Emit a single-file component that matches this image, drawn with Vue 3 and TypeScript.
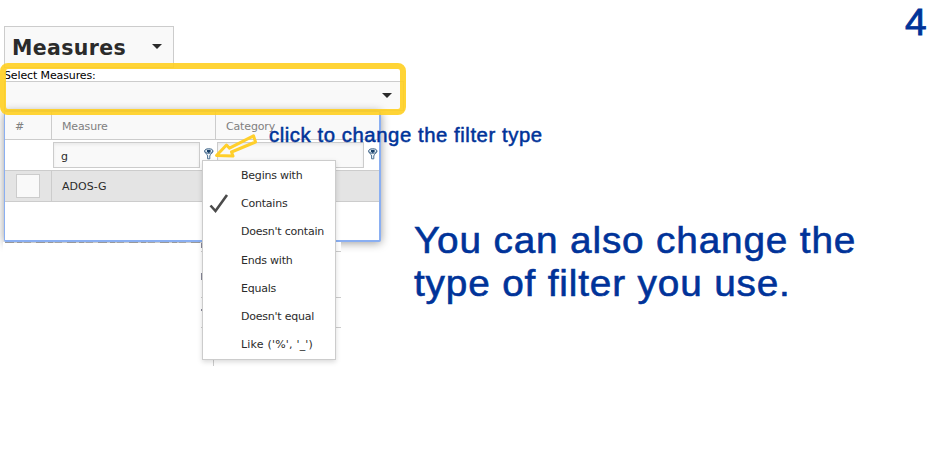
<script setup lang="ts">
import { ref } from 'vue'

interface FilterType { label: string; wide?: boolean }

const filterTypes: FilterType[] = [
  { label: 'Begins with' },
  { label: 'Contains' },
  { label: "Doesn't contain" },
  { label: 'Ends with' },
  { label: 'Equals' },
  { label: "Doesn't equal" },
  { label: "Like ('%', '_')", wide: true },
]
const selected = ref('Contains')
const measureFilter = ref('g')
const categoryFilter = ref('')
</script>

<template>
  <main class="slide">
    <section class="left">
      <button class="measures" type="button">
        <span>Measures</span>
        <svg class="caret" width="10" height="5" viewBox="0 0 10 5"><path d="M0 0H10L5 5Z" /></svg>
      </button>
      <div class="label">Select Measures:</div>
      <div class="combo">
        <svg class="caret" width="10" height="5" viewBox="0 0 10 5"><path d="M0 0H10L5 5Z" /></svg>
      </div>
      <div class="panel">
        <div class="row head">
          <div class="cell">#</div>
          <div class="cell">Measure</div>
          <div class="cell last">Category</div>
        </div>
        <div class="row filters">
          <div class="cell"></div>
          <div class="cell">
            <input v-model="measureFilter" type="text" />
            <svg class="funnel" width="10" height="12" viewBox="0 0 10 12">
              <path class="cone" d="M.8 3.2C.8 5.8 3.6 6 3.6 8V10.8H5.8V8C5.8 6 8.8 5.8 8.8 3.2" />
              <ellipse class="rim" cx="4.8" cy="3" rx="4.1" ry="2.2" />
              <path class="core" d="M3 2H6.6V3.3L4.8 5.2L3 3.3Z" />
            </svg>
          </div>
          <div class="cell last">
            <input v-model="categoryFilter" type="text" />
            <svg class="funnel" width="10" height="12" viewBox="0 0 10 12">
              <path class="cone" d="M.8 3.2C.8 5.8 3.6 6 3.6 8V10.8H5.8V8C5.8 6 8.8 5.8 8.8 3.2" />
              <ellipse class="rim" cx="4.8" cy="3" rx="4.1" ry="2.2" />
              <path class="core" d="M3 2H6.6V3.3L4.8 5.2L3 3.3Z" />
            </svg>
          </div>
        </div>
        <div class="row data">
          <div class="cell"><span class="box"></span></div>
          <div class="cell">ADOS-G</div>
          <div class="cell last"></div>
        </div>
      </div>
      <div class="behind">
        <div class="edge"></div>
        <svg class="rules" width="341" height="124" viewBox="0 0 341 124">
          <path d="M201 9.5H341M201 55.5H341M201 85.5H341M213.5 100V124" />
          <path class="bits" d="M201.5 1V6M201.5 31V38M201.5 67V69" />
        </svg>
      </div>
    </section>

    <div class="highlight"></div>

    <ul class="menu">
      <li v-for="f in filterTypes" :key="f.label" @click="selected = f.label">
        <span class="mark">
          <svg v-if="selected === f.label" width="20" height="20" viewBox="0 0 20 20">
            <path d="M1.5 11.5L6.5 17L18 1" />
          </svg>
        </span>
        <span class="text" :class="{ wide: f.wide }">{{ f.label }}</span>
      </li>
    </ul>

    <svg class="arrow" width="46" height="30" viewBox="0 0 46 30">
      <path d="M2.5 23.5L12.5 13L15.5 16.2L39.5 3.8L41.5 10L17.5 20L19 24Z" />
    </svg>
    <div class="note">click to change the filter type</div>
    <p class="message">You can also change the<br />type of filter you use.</p>
    <div class="number">4</div>
  </main>
</template>

<style>
body { background: #fff; overflow: hidden; }
</style>

<style scoped>
.slide {
  position: relative;
  box-sizing: border-box;
  width: 950px;
  height: 450px;
  padding-top: 26px;
  overflow: hidden;
  background: #fff;
  color: #2b2b2b;
  font: 11px/14px "DejaVu Sans", Verdana, sans-serif;
}
.slide *, .slide *::before { box-sizing: border-box; }
.left { width: 404px; }
.measures {
  display: flex;
  align-items: center;
  justify-content: space-between;
  width: 170px;
  height: 42px;
  margin-left: 4px;
  padding: 0 11px 0 7px;
  border: 1px solid #ccc;
  background: #f9f9f9;
  color: #2b2b2b;
  font: bold 20.5px/24px "DejaVu Sans", Verdana, sans-serif;
}
.measures span { padding-top: 2px; letter-spacing: 0.35px; }
.measures .caret { margin-bottom: 1px; }
.caret { display: block; fill: #2b2b2b; }
.label {
  height: 13px;
  margin-left: 4px;
  padding-top: 1px;
  color: #000;
  letter-spacing: -0.12px;
  white-space: nowrap;
}
.combo {
  display: flex;
  align-items: center;
  justify-content: flex-end;
  width: 400px;
  height: 30px;
  margin-left: 4px;
  padding: 0 11px 1px 0;
  border: 1px solid #ccc;
  background: #f9f9f9;
}
.panel {
  width: 377px;
  height: 131px;
  margin-left: 4px;
  border: 1px solid #8aaff2;
  border-bottom-width: 2px;
  border-right-width: 2px;
  border-radius: 2px;
  background: #fff;
  box-shadow: 0 1px 10px rgba(0, 0, 0, 0.4);
}
.row { display: flex; border-bottom: 1px solid #ccc; }
.cell { display: flex; align-items: center; width: 164px; border-right: 1px solid #ccc; padding-left: 10px; }
.cell:first-child { width: 47px; }
.cell.last { flex: 1; border-right: 0; }
.head { height: 28px; background: #f9f9f9; color: #808080; letter-spacing: -0.15px; }
.head .cell { padding-top: 2px; }
.filters { height: 31px; }
.filters .cell { border-right-color: transparent; padding-left: 1px; }
.filters input {
  width: 147px;
  height: 26px;
  padding: 3px 0 0 7px;
  border: 1px solid #ccc;
  background: #f9f9f9;
  box-shadow: inset 0 2px 3px rgba(0, 0, 0, 0.06);
  color: #2b2b2b;
  font: inherit;
  outline: 0;
}
.funnel { flex: none; margin: 0 0 3px 4px; }
.cone { fill: #f3f7fa; stroke: #4b7092; stroke-width: 1; }
.rim { fill: #dce8f1; stroke: #3a5f84; stroke-width: 1; }
.core { fill: #183f68; }
.data { height: 31px; background: #e4e4e4; }
.data .cell:nth-child(2) { border-right-color: transparent; padding-top: 2px; }
.box { width: 24px; height: 24px; margin-left: 1px; border: 1px solid #ccc; background: #f9f9f9; }
.behind { position: relative; width: 338px; height: 126px; margin-left: 3px; background: #fff; }
.edge {
  width: 197px;
  height: 1px;
  margin-left: 2px;
  background: repeating-linear-gradient(90deg, #999 0 9px, #ccc 9px 12px, #999 12px 17px, #c4c4c4 17px 19px, #a4a4a4 19px 26px, #ccc 26px 31px);
}
.rules { position: absolute; left: -3px; top: 0; fill: none; stroke: #ccc; }
.bits { stroke: #889; }
.highlight {
  position: absolute;
  left: 0;
  top: 63px;
  width: 406px;
  height: 52px;
  border: 6px solid rgba(255, 207, 32, 0.9);
  border-radius: 8px;
}
.menu {
  position: absolute;
  left: 202px;
  top: 160px;
  width: 134px;
  height: 200px;
  margin: 0;
  padding: 0;
  border: 1px solid #ccc;
  background: #fff;
  box-shadow: 0 2px 5px rgba(0, 0, 0, 0.15);
  list-style: none;
}
.menu li { display: flex; align-items: center; height: 28.2px; white-space: nowrap; }
.text { padding-top: 2px; letter-spacing: -0.22px; }
.text.wide { letter-spacing: 0.2px; }
.mark { display: flex; width: 38px; padding: 1px 0 0 6px; }
.mark path { fill: none; stroke: #4b4b4b; stroke-width: 2.6; }
.arrow { position: absolute; left: 214px; top: 132px; fill: none; stroke: #ffcf2b; stroke-width: 3; stroke-linejoin: round; }
.note {
  position: absolute;
  left: 269px;
  top: 124px;
  color: #039;
  font: 19.5px/22px "Liberation Sans", Arial, sans-serif;
  letter-spacing: 0.55px;
  -webkit-text-stroke: 0.5px #039;
  white-space: nowrap;
  transform: scaleX(1.04);
  transform-origin: left;
}
.message {
  position: absolute;
  left: 414px;
  top: 219px;
  margin: 0;
  color: #039;
  font: 37px/43px "Liberation Sans", Arial, sans-serif;
  letter-spacing: 0.8px;
  -webkit-text-stroke: 0.6px #039;
  white-space: nowrap;
  transform: scaleX(1.047);
  transform-origin: left;
}
.number {
  position: absolute;
  left: 905px;
  top: 1px;
  color: #039;
  font: 36px/43px "Liberation Sans", Arial, sans-serif;
  -webkit-text-stroke: 0.8px #039;
  transform: scaleX(1.08);
  transform-origin: left;
}
</style>
